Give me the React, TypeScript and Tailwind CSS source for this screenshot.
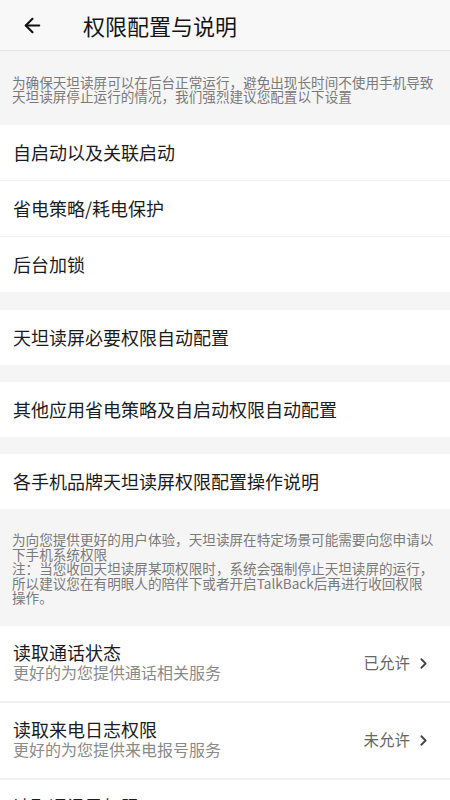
import { ArrowLeft, ChevronRight } from 'lucide-react';

const FONT = { fontFamily: '"Noto Sans CJK SC", "Noto Sans", sans-serif' };

type Perm = { title: string; desc: string; status: string };

const PERMS: Perm[] = [
  { title: '读取通话状态', desc: '更好的为您提供通话相关服务', status: '已允许' },
  { title: '读取来电日志权限', desc: '更好的为您提供来电报号服务', status: '未允许' },
  { title: '读取通讯录权限', desc: '更好的为您提供联系人相关服务', status: '未允许' },
];

function Row({ label }: { label: string }) {
  return (
    <div className="h-[55px] flex items-center px-[13px] bg-white text-[18px] text-[#1c1c1c]">
      {label}
    </div>
  );
}

export default function App() {
  return (
    <div className="w-[450px] h-[800px] overflow-hidden bg-[#f5f5f5]" style={FONT}>
      {/* 顶栏 */}
      <div className="h-[51px] flex items-center bg-[#f8f8f8] border-b border-[#e4e4e4]">
        <ArrowLeft className="ml-[21px] w-[23px] h-[23px] text-[#111]" strokeWidth={2.2} />
        <span className="ml-[39px] text-[22px] text-[#151515] leading-none">权限配置与说明</span>
      </div>

      <p className="px-[12px] pt-[24px] pb-[22px] text-[13.6px] leading-[14px] text-[#7a7a7a]">
        为确保天坦读屏可以在后台正常运行，避免出现长时间不使用手机导致
        <br />
        天坦读屏停止运行的情况，我们强烈建议您配置以下设置
      </p>

      <div className="flex flex-col gap-px bg-[#f1f1f1]">
        <Row label="自启动以及关联启动" />
        <Row label="省电策略/耗电保护" />
        <Row label="后台加锁" />
      </div>

      <div className="mt-[18px]">
        <Row label="天坦读屏必要权限自动配置" />
      </div>
      <div className="mt-[17px]">
        <Row label="其他应用省电策略及自启动权限自动配置" />
      </div>
      <div className="mt-[17px]">
        <Row label="各手机品牌天坦读屏权限配置操作说明" />
      </div>

      <p className="px-[12px] pt-[23px] pb-[21px] text-[13.6px] leading-[14.5px] text-[#7a7a7a]">
        为向您提供更好的用户体验，天坦读屏在特定场景可能需要向您申请以
        <br />
        下手机系统权限
        <br />
        注：当您收回天坦读屏某项权限时，系统会强制停止天坦读屏的运行，
        <br />
        所以建议您在有明眼人的陪伴下或者开启TalkBack后再进行收回权限
        <br />
        操作。
      </p>

      <div className="flex flex-col gap-[2px] bg-[#f1f1f1]">
        {PERMS.map((p) => (
          <div key={p.title} className="h-[75px] flex items-center bg-white pl-[13px] pr-[18px]">
            <div className="flex-1 flex flex-col pb-[3px]">
              <span className="text-[18px] leading-[22px] text-[#1c1c1c]">{p.title}</span>
              <span className="text-[16px] leading-[19px] text-[#8a8a8a]">{p.desc}</span>
            </div>
            <span className="text-[15.5px] text-[#666]">{p.status}</span>
            <ChevronRight className="ml-[5px] w-[17px] h-[17px] text-[#444]" strokeWidth={2.6} />
          </div>
        ))}
      </div>
    </div>
  );
}
